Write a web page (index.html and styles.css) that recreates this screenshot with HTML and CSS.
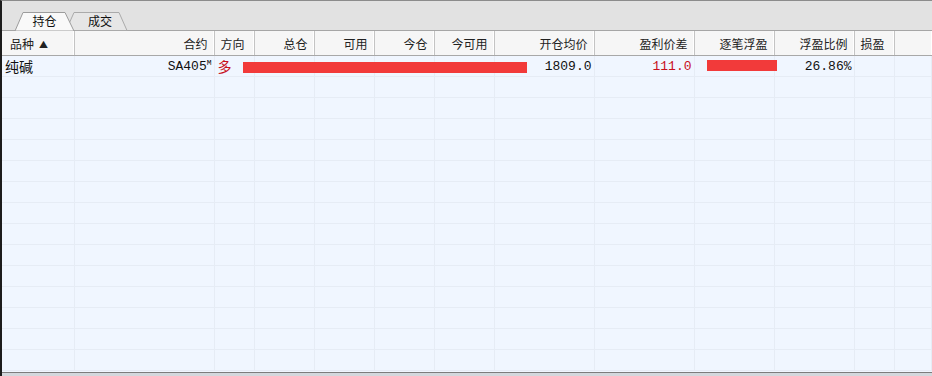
FILE: index.html
```html
<!DOCTYPE html>
<html lang="zh">
<head>
    <meta charset="UTF-8">
    <title>持仓</title>
    <link rel="stylesheet" href="styles.css">
</head>
<body>
<div id="panel">
    <div class="tabbar">
        <svg class="tabs" width="140" height="20" viewBox="0 0 140 20">
            <polygon class="tab-off" points="64,19.5 72,1.5 117,1.5 125,19.5"/>
            <polygon class="tab-on" points="13,20 21,1.5 63,1.5 72,20"/>
            <text x="42.5" y="15" class="tab-text">持仓</text>
            <text x="98" y="15" class="tab-text">成交</text>
        </svg>
    </div>
    <table id="grid">
        <colgroup>
            <col style="width:72px"><col style="width:140px"><col style="width:40px">
            <col style="width:60px"><col style="width:60px"><col style="width:60px">
            <col style="width:60px"><col style="width:100px"><col style="width:100px">
            <col style="width:80px"><col style="width:80px"><col style="width:40px">
            <col>
        </colgroup>
        <thead>
        <tr>
            <th class="left first">品种<span class="sort">▲</span></th>
            <th>合约</th>
            <th class="left">方向</th>
            <th>总仓</th>
            <th>可用</th>
            <th>今仓</th>
            <th>今可用</th>
            <th>开仓均价</th>
            <th>盈利价差</th>
            <th>逐笔浮盈</th>
            <th>浮盈比例</th>
            <th class="left">损盈</th>
            <th class="last"></th>
        </tr>
        </thead>
        <tbody id="rows">
        <tr>
            <td class="name">纯碱</td>
            <td class="num">SA405<sup>M</sup></td>
            <td class="dir">多<span class="bar bar-wide"></span></td>
            <td></td>
            <td></td>
            <td></td>
            <td></td>
            <td class="num">1809.0</td>
            <td class="num red">111.0</td>
            <td class="barcell"><span class="bar bar-small"></span></td>
            <td class="num">26.86%</td>
            <td></td>
            <td></td>
        </tr>
        </tbody>
    </table>
    <div class="footer"></div>
</div>

<script>
// lignes vides du tableau
var tbody = document.getElementById("rows");
for (var i = 0; i < 14; i++) {
    var tr = document.createElement("tr");
    for (var j = 0; j < 13; j++) {
        tr.appendChild(document.createElement("td"));
    }
    tbody.appendChild(tr);
}
</script>
</body>
</html>
```

FILE: styles.css
```css
html, body {
    margin: 0;
    padding: 0;
    background: #f0f6ff;
}
#panel {
    width: 932px;
    height: 376px;
    box-sizing: border-box;
    border-top: 1px solid #8c8c8c;
    border-left: 2px solid #1c1c1c;
    display: flex;
    flex-direction: column;
    overflow: hidden;
    font-family: "Noto Sans CJK SC", "Liberation Sans", sans-serif;
    color: #222;
}
.tabbar {
    height: 29px;
    background: #e2e2e2;
    border-bottom: 1px solid #a6a6a6;
    display: flex;
    align-items: flex-end;
}
.tabs {
    display: block;
    margin-bottom: -1px;
}
.tab-on {
    fill: #f9f9f9;
    stroke: #9c9c9c;
    stroke-width: 1;
}
.tab-off {
    fill: #e6e6e6;
    stroke: #aaaaaa;
    stroke-width: 1;
}
.tab-text {
    font-family: "Noto Sans CJK SC", sans-serif;
    font-size: 12px;
    fill: #111;
    text-anchor: middle;
}
#grid {
    border-collapse: collapse;
    table-layout: fixed;
    width: 930px;
}
#grid th {
    height: 24px;
    padding: 0 6px 0 0;
    background: #f6f6f6;
    border-right: 1px solid #c4c4c4;
    border-bottom: 1px solid #a8a8a8;
    box-shadow: inset -1px 0 0 #ffffff;
    font-size: 12px;
    font-weight: normal;
    text-align: right;
    white-space: nowrap;
    color: #222;
}
#grid th.left {
    text-align: left;
    padding-left: 6px;
}
#grid th.first {
    padding-left: 8px;
}
#grid th.last {
    border-right: none;
}
.sort {
    font-size: 9px;
    margin-left: 5px;
    position: relative;
    top: -1px;
}
#grid td {
    height: 20px;
    padding: 0 2px 0 0;
    border-right: 1px solid #e6ecf5;
    border-bottom: 1px solid #e6ecf5;
    white-space: nowrap;
    overflow: hidden;
    text-align: right;
    font-family: "Liberation Mono", monospace;
    font-size: 13px;
    color: #111;
}
#grid td.name {
    text-align: left;
    padding-left: 3px;
    font-family: "Noto Sans CJK SC", sans-serif;
    font-size: 14px;
}
#grid td.dir {
    text-align: left;
    padding-left: 3px;
    overflow: visible;
    font-family: "Noto Sans CJK SC", sans-serif;
    font-size: 14px;
    color: #c8101c;
}
#grid td.red {
    color: #c8101c;
}
sup {
    font-size: 8px;
    vertical-align: 5px;
}
#grid td.barcell {
    padding: 0;
    text-align: left;
    overflow: visible;
}
.bar {
    display: inline-block;
    height: 11px;
    background: #f23a3a;
    vertical-align: -1px;
}
.bar-wide {
    width: 284px;
    margin-left: 11px;
}
.bar-small {
    width: 70px;
    margin-left: 12px;
}
.footer {
    margin-top: auto;
    height: 3px;
    border-top: 1px solid #7c7c7c;
    background: #d3d7dc;
}
```
